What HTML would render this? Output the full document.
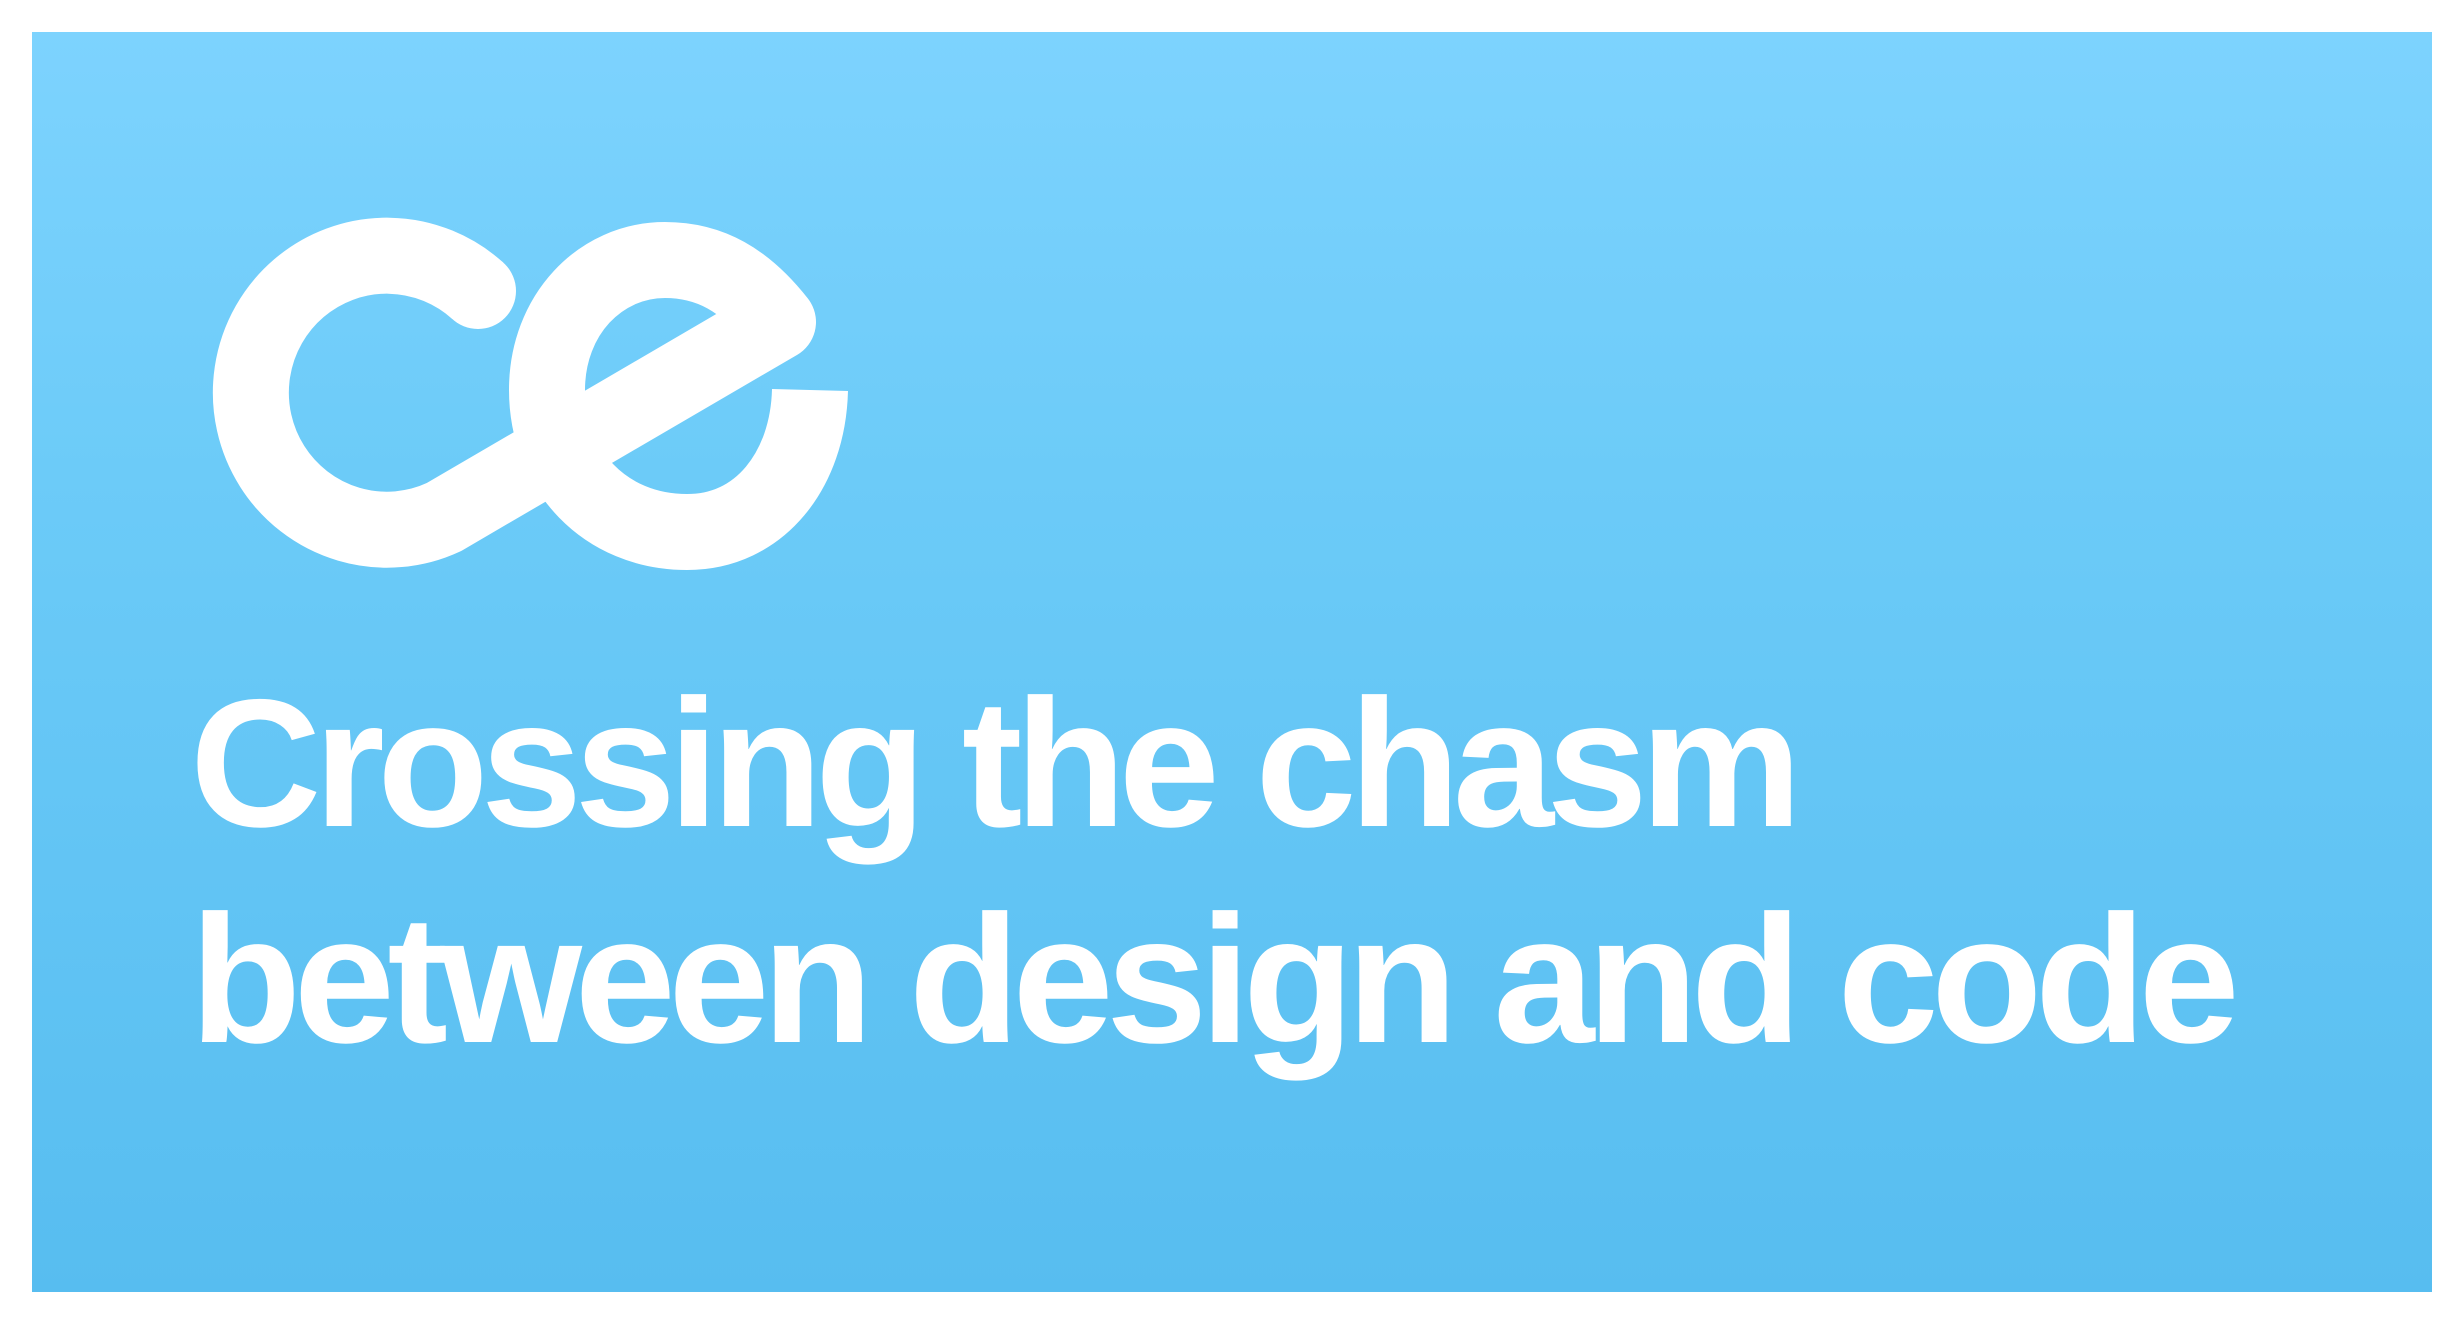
<!DOCTYPE html>
<html><head><meta charset="utf-8"><style>
html,body{margin:0;padding:0;background:#fff;}
body{width:2464px;height:1324px;position:relative;overflow:hidden;}
.panel{position:absolute;left:32px;top:32px;width:2400px;height:1260px;background:linear-gradient(180deg,#7dd3fe 0%,#6ccbf8 35%,#57bdf0 100%);}
.t{position:absolute;left:190px;font-family:"Liberation Sans",sans-serif;font-weight:bold;font-size:182px;letter-spacing:-7.5px;color:#fff;white-space:nowrap;line-height:1;}
svg{position:absolute;left:0;top:0;}
</style></head><body>
<div class="panel"></div>
<svg width="2464" height="1324">
<path d="M 478,291 A 136 137 0 1 0 444,517 L 778,322 C 745,280 710,260 665,260 C 600,260 547,315 547,390 C 547,470 605,532 687,532 C 760,532 808,470 810,390" fill="none" stroke="#fff" stroke-width="76" stroke-linecap="butt" stroke-linejoin="round"/>
<circle cx="478" cy="291" r="38" fill="#fff"/>
</svg>
<div class="t" style="top:672px">Crossing the chasm</div>
<div class="t" style="top:888px">between design and code</div>
</body></html>
